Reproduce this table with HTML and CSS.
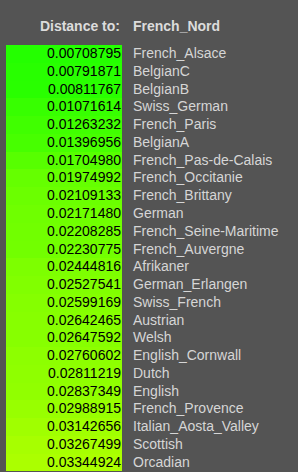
FILE: index.html
```html
<!DOCTYPE html>
<html>
<head>
<meta charset="utf-8">
<link rel="stylesheet" href="styles.css">
</head>
<body>
<div class="panel">
  <div class="head">
    <div class="head-label">Distance to:</div>
    <div class="head-name">French_Nord</div>
  </div>
  <div class="list">
    <div class="dist" style="background:#24ff00">0.00708795</div><div class="name">French_Alsace</div>
    <div class="dist" style="background:#28ff00">0.00791871</div><div class="name">BelgianC</div>
    <div class="dist" style="background:#29ff00">0.00811767</div><div class="name">BelgianB</div>
    <div class="dist" style="background:#37ff00">0.01071614</div><div class="name">Swiss_German</div>
    <div class="dist" style="background:#40ff00">0.01263232</div><div class="name">French_Paris</div>
    <div class="dist" style="background:#47ff00">0.01396956</div><div class="name">BelgianA</div>
    <div class="dist" style="background:#57ff00">0.01704980</div><div class="name">French_Pas-de-Calais</div>
    <div class="dist" style="background:#65ff00">0.01974992</div><div class="name">French_Occitanie</div>
    <div class="dist" style="background:#6bff00">0.02109133</div><div class="name">French_Brittany</div>
    <div class="dist" style="background:#6fff00">0.02171480</div><div class="name">German</div>
    <div class="dist" style="background:#71ff00">0.02208285</div><div class="name">French_Seine-Maritime</div>
    <div class="dist" style="background:#72ff00">0.02230775</div><div class="name">French_Auvergne</div>
    <div class="dist" style="background:#7dff00">0.02444816</div><div class="name">Afrikaner</div>
    <div class="dist" style="background:#81ff00">0.02527541</div><div class="name">German_Erlangen</div>
    <div class="dist" style="background:#85ff00">0.02599169</div><div class="name">Swiss_French</div>
    <div class="dist" style="background:#87ff00">0.02642465</div><div class="name">Austrian</div>
    <div class="dist" style="background:#87ff00">0.02647592</div><div class="name">Welsh</div>
    <div class="dist" style="background:#8dff00">0.02760602</div><div class="name">English_Cornwall</div>
    <div class="dist" style="background:#8fff00">0.02811219</div><div class="name">Dutch</div>
    <div class="dist" style="background:#91ff00">0.02837349</div><div class="name">English</div>
    <div class="dist" style="background:#98ff00">0.02988915</div><div class="name">French_Provence</div>
    <div class="dist" style="background:#a0ff00">0.03142656</div><div class="name">Italian_Aosta_Valley</div>
    <div class="dist" style="background:#a7ff00">0.03267499</div><div class="name">Scottish</div>
    <div class="dist" style="background:#abff00">0.03344924</div><div class="name">Orcadian</div>
  </div>
</div>
</body>
</html>
```
FILE: styles.css
```css
html, body {
  margin: 0;
  padding: 0;
  background: #545454;
}

body {
  font-family: "Liberation Sans", Arial, sans-serif;
  font-size: 14px;
  line-height: 17.78px;
}

.panel {
  padding: 18.3px 0 0 6px;
  display: flex;
  flex-direction: column;
  gap: 9px;
}

.head,
.list {
  display: grid;
  grid-template-columns: 116px 1fr;
  column-gap: 11px;
}

.list {
  grid-auto-rows: 17.78px;
}

.head-label {
  text-align: right;
  padding-right: 2px;
  font-weight: bold;
  color: #dcdcdc;
}

.head-name {
  font-weight: bold;
  color: #dcdcdc;
}

.dist {
  text-align: right;
  padding-right: 1px;
  color: #000;
  white-space: nowrap;
}

.name {
  color: #d6d6d6;
  white-space: nowrap;
}
```
